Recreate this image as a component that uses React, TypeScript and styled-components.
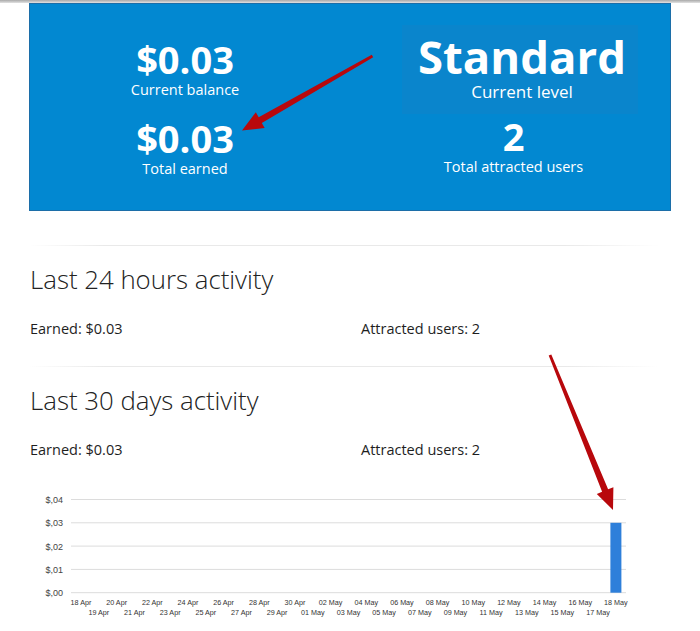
import styled, { createGlobalStyle } from 'styled-components';

const GlobalStyle = createGlobalStyle`
  body {
    margin: 0;
    background: #fff;
    font-family: 'Open Sans', 'Liberation Sans', sans-serif;
    color: #1e1e1e;
  }
`;

const TopShade = styled.div`
  height: 3px;
  background: linear-gradient(#a9a9a9, #e2e2e2);
`;

const Page = styled.div`
  position: relative;
  width: 642px;
  padding: 0 29px;
`;

const Hero = styled.div`
  box-sizing: border-box;
  height: 208px;
  border: 1px solid #1c6ea8;
  background: #0288d1;
  color: #fff;
  display: grid;
  grid-template-columns: 310px 236px;
  column-gap: 62px;
  text-align: center;
`;

const StatColumn = styled.div`
  padding-top: 35px;
  display: flex;
  flex-direction: column;
  gap: 18px;
`;

const LevelColumn = styled.div`
  padding-top: 21px;
  display: flex;
  flex-direction: column;
  gap: 2px;
`;

const LevelPanel = styled.div`
  background: #0a85cc;
  padding: 7px 0 11px 4px;
`;

const ShiftedStat = styled.div`
  padding-right: 13px;
`;

const BigValue = styled.div<{ $size?: number }>`
  font-weight: 700;
  font-size: ${(p) => p.$size ?? 38}px;
  line-height: ${(p) => (p.$size ?? 38) + 3}px;
`;

const ValueLabel = styled.div<{ $size?: number }>`
  font-size: ${(p) => p.$size ?? 14.5}px;
  line-height: ${(p) => (p.$size ?? 14.5) + 5}px;
`;

const Divider = styled.div`
  height: 1px;
  width: 630px;
  background: linear-gradient(90deg, rgba(230, 230, 230, 0), #e9e9e9 12%, #e9e9e9 85%, rgba(230, 230, 230, 0));
`;

const Spacer = styled.div<{ $h: number }>`
  height: ${(p) => p.$h}px;
`;

const Section = styled.div`
  padding-left: 1px;
`;

const SectionTitle = styled.h2`
  margin: 15px 0 0;
  font-weight: 300;
  font-size: 25.8px;
  line-height: 36px;
  color: #222;
`;

const StatsRow = styled.div`
  display: grid;
  grid-template-columns: 331px 1fr;
  margin: 22px 0 27px;
  font-size: 14.5px;
  line-height: 20px;
`;

const ChartBox = styled.div`
  margin-top: -17px;
  svg {
    display: block;
  }
`;

const Overlay = styled.svg`
  position: absolute;
  top: -3px;
  left: 0;
  pointer-events: none;
`;

const days: string[] = [];
for (let i = 0; i <= 30; i++) {
  const d = new Date(2016, 3, 18 + i);
  const dd = String(d.getDate()).padStart(2, '0');
  days.push(`${dd} ${d.getMonth() === 3 ? 'Apr' : 'May'}`);
}

const values = days.map((_, i) => (i === 30 ? 0.03 : 0));

const Chart = () => {
  const top = 29.5;
  const step = 23.3;
  const x0 = 42;
  const x1 = 597;
  const base = top + step * 4;
  const dayX = (i: number) => 52 + i * 17.83;
  return (
    <svg width={610} height={150}>
      {[0.04, 0.03, 0.02, 0.01, 0].map((v, i) => (
        <g key={v}>
          <line x1={x0} x2={x1} y1={top + i * step} y2={top + i * step} stroke="#dcdcdc" strokeWidth={1} />
          <text
            x={34}
            y={top + i * step + 3.5}
            textAnchor="end"
            fontFamily="'Liberation Sans', Arial, sans-serif"
            fontSize={9}
            fill="#444"
          >
            {`$,${v.toFixed(2).split('.')[1]}`}
          </text>
        </g>
      ))}
      {values.map((v, i) =>
        v > 0 ? (
          <rect
            key={i}
            x={dayX(i) - 5.5}
            y={base - (v / 0.01) * step}
            width={11}
            height={(v / 0.01) * step}
            fill="#2e7fda"
          />
        ) : null,
      )}
      {days.map((d, i) => (
        <text
          key={d}
          x={dayX(i)}
          y={i % 2 === 0 ? 134.5 : 145}
          textAnchor="middle"
          fontFamily="'Liberation Sans', Arial, sans-serif"
          fontSize={7.2}
          fill="#333"
        >
          {d}
        </text>
      ))}
    </svg>
  );
};

// tapered red pointer: thin at the tail, wider near the head
const arrowPoints = (tx: number, ty: number, hx: number, hy: number) => {
  const dx = hx - tx;
  const dy = hy - ty;
  const len = Math.hypot(dx, dy);
  const ux = dx / len;
  const uy = dy / len;
  const nx = -uy;
  const ny = ux;
  const headLen = 21;
  const bx = hx - ux * headLen;
  const by = hy - uy * headLen;
  const pts: [number, number][] = [
    [tx + nx * 1.4, ty + ny * 1.4],
    [bx + nx * 3.2, by + ny * 3.2],
    [bx + nx * 9, by + ny * 9],
    [hx, hy],
    [bx - nx * 9, by - ny * 9],
    [bx - nx * 3.2, by - ny * 3.2],
    [tx - nx * 1.4, ty - ny * 1.4],
  ];
  return pts.map((p) => p.map((n) => n.toFixed(1)).join(',')).join(' ');
};

const StatBlock = ({ value, label }: { value: string; label: string }) => (
  <div>
    <BigValue>{value}</BigValue>
    <ValueLabel>{label}</ValueLabel>
  </div>
);

const ActivitySection = ({ title, earned, users }: { title: string; earned: string; users: number }) => (
  <Section>
    <SectionTitle>{title}</SectionTitle>
    <StatsRow>
      <span>Earned: {earned}</span>
      <span>Attracted users: {users}</span>
    </StatsRow>
  </Section>
);

export default function App() {
  return (
    <>
      <GlobalStyle />
      <TopShade />
      <Page>
        <Hero>
          <StatColumn>
            <StatBlock value="$0.03" label="Current balance" />
            <StatBlock value="$0.03" label="Total earned" />
          </StatColumn>
          <LevelColumn>
            <LevelPanel>
              <BigValue $size={45.5}>Standard</BigValue>
              <ValueLabel $size={17}>Current level</ValueLabel>
            </LevelPanel>
            <ShiftedStat>
              <StatBlock value="2" label="Total attracted users" />
            </ShiftedStat>
          </LevelColumn>
        </Hero>
        <Spacer $h={34} />
        <Divider />
        <ActivitySection title="Last 24 hours activity" earned="$0.03" users={2} />
        <Divider />
        <ActivitySection title="Last 30 days activity" earned="$0.03" users={2} />
        <ChartBox>
          <Chart />
        </ChartBox>
        <Overlay width={700} height={631}>
          <polygon points={arrowPoints(372.5, 56, 242, 130.5)} fill="#b8080c" />
          <polygon points={arrowPoints(550, 355, 613, 510)} fill="#b8080c" />
        </Overlay>
      </Page>
    </>
  );
}
